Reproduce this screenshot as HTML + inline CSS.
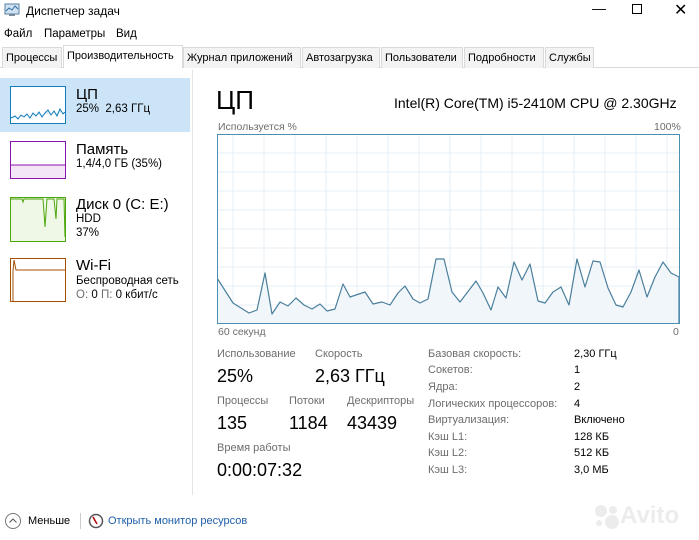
<!DOCTYPE html>
<html><head><meta charset="utf-8"><style>
*{margin:0;padding:0;box-sizing:border-box}
body{width:699px;height:540px;background:#fff;font-family:"Liberation Sans","Noto Sans CJK SC",sans-serif;color:#000;position:relative;overflow:hidden;font-size:12px}
.a{position:absolute;white-space:nowrap}
.tab{position:absolute;top:47px;height:21px;background:#f3f3f3;border:1px solid #dadada;border-bottom:none;font-size:11px;padding:4px 0 0 3px;overflow:hidden}
.g{color:#6d6d6d;font-size:11px}
.big{font-size:18px}
.k{font-size:11px;color:#6d6d6d}
.v{font-size:11px;color:#000}
</style></head><body>
<svg class="a" style="left:4px;top:2px" width="18" height="16"><rect x="1" y="2" width="14" height="10" fill="#cfe3f3" stroke="#5a7fa0"/><polyline points="2,9 5,6 8,8 11,4 14,7" fill="none" stroke="#2d6aa0"/><rect x="5" y="12" width="6" height="2" fill="#7a8a99"/></svg>
<div class="a" style="left:26px;top:4px;font-size:12px">Диспетчер задач</div>
<div class="a" style="left:592px;top:0px;font-size:14px">—</div>
<div class="a" style="left:632px;top:4px;width:10px;height:10px;border:1px solid #000"></div>
<div class="a" style="left:674px;top:0px;font-size:16px">✕</div>
<div class="a" style="left:4px;top:28px;font-size:11.5px">Файл</div>
<div class="a" style="left:44px;top:28px;font-size:11.5px">Параметры</div>
<div class="a" style="left:116px;top:28px;font-size:11.5px">Вид</div>
<div class="a" style="left:0;top:67px;width:699px;height:1px;background:#dadada"></div>
<div class="tab" style="left:2px;width:60px">Процессы</div>
<div class="tab" style="left:63px;width:120px;top:45px;height:23px;background:#fff">Производительность</div>
<div class="tab" style="left:183px;width:118px">Журнал приложений</div>
<div class="tab" style="left:302px;width:78px">Автозагрузка</div>
<div class="tab" style="left:381px;width:82px">Пользователи</div>
<div class="tab" style="left:464px;width:80px">Подробности</div>
<div class="tab" style="left:545px;width:49px">Службы</div>

<div class="a" style="left:0;top:78px;width:190px;height:54px;background:#cce4f7"></div>
<div class="a" style="left:192px;top:70px;width:1px;height:425px;background:#e3e3e3"></div>
<svg class="a" style="left:10px;top:86px" width="56" height="38"><rect x=".5" y=".5" width="55" height="37" fill="#fff" stroke="#117dbb"/><polyline points="1,32 5,30 8,33 11,29 14,31 17,28 20,32 23,27 26,30 29,26 32,31 35,27 38,24 41,29 44,25 47,30 50,23 53,28 55,26" fill="#dcecf7" stroke="#117dbb"/></svg>
<div class="a" style="left:76px;top:86px;font-size:15px">ЦП</div>
<div class="a" style="left:76px;top:103px;font-size:11.5px">25%&nbsp; 2,63 ГГц</div>

<svg class="a" style="left:10px;top:141px" width="56" height="38"><rect x=".5" y=".5" width="55" height="37" fill="#fff" stroke="#8b12ae"/><rect x="1" y="24" width="54" height="13" fill="#f3e6f7"/><line x1="1" y1="24" x2="55" y2="24" stroke="#8b12ae"/></svg>
<div class="a" style="left:76px;top:141px;font-size:15px">Память</div>
<div class="a" style="left:76px;top:158px;font-size:11.5px">1,4/4,0 ГБ (35%)</div>

<svg class="a" style="left:10px;top:197px" width="56" height="45"><rect x=".5" y=".5" width="55" height="44" fill="#eff7e6" stroke="#4da60c"/><polyline points="1,2 12,2 13,5 14,2 33,2 35,30 37,2 44,2 46,22 47,2 54,2 55,40" fill="none" stroke="#4da60c"/></svg>
<div class="a" style="left:76px;top:196px;font-size:15px">Диск 0 (C: E:)</div>
<div class="a" style="left:76px;top:213px;font-size:11.5px">HDD</div>
<div class="a" style="left:76px;top:227px;font-size:11.5px">37%</div>

<svg class="a" style="left:10px;top:258px" width="56" height="44"><rect x=".5" y=".5" width="55" height="43" fill="#fff" stroke="#a74f01"/><polyline points="3,44 3,13 4,2 6,12 55,12" fill="none" stroke="#a74f01"/></svg>
<div class="a" style="left:76px;top:257px;font-size:15px">Wi-Fi</div>
<div class="a" style="left:76px;top:275px;font-size:11.5px">Беспроводная сеть</div>
<div class="a" style="left:76px;top:289px;font-size:11.5px"><span style="color:#6d6d6d">О:</span> 0 <span style="color:#6d6d6d">П:</span> 0 кбит/с</div>

<div class="a" style="left:216px;top:85px;font-size:26px">ЦП</div>
<div class="a" style="left:394px;top:95px;font-size:14px">Intel(R) Core(TM) i5-2410M CPU @ 2.30GHz</div>
<div class="a g" style="left:218px;top:121px;font-size:10.5px">Используется %</div>
<div class="a g" style="left:654px;top:121px;font-size:10.5px">100%</div>
<svg class="a" style="left:217px;top:134px" width="463" height="190">
<g stroke="#e3eff6" stroke-width="1">
<line x1="16" y1="0" x2="16" y2="190"/><line x1="47" y1="0" x2="47" y2="190"/><line x1="78" y1="0" x2="78" y2="190"/><line x1="109" y1="0" x2="109" y2="190"/><line x1="140" y1="0" x2="140" y2="190"/><line x1="171" y1="0" x2="171" y2="190"/><line x1="202" y1="0" x2="202" y2="190"/><line x1="233" y1="0" x2="233" y2="190"/><line x1="264" y1="0" x2="264" y2="190"/><line x1="295" y1="0" x2="295" y2="190"/><line x1="326" y1="0" x2="326" y2="190"/><line x1="357" y1="0" x2="357" y2="190"/><line x1="388" y1="0" x2="388" y2="190"/><line x1="419" y1="0" x2="419" y2="190"/><line x1="450" y1="0" x2="450" y2="190"/>
<line x1="0" y1="19" x2="463" y2="19"/><line x1="0" y1="38" x2="463" y2="38"/><line x1="0" y1="57" x2="463" y2="57"/><line x1="0" y1="76" x2="463" y2="76"/><line x1="0" y1="95" x2="463" y2="95"/><line x1="0" y1="114" x2="463" y2="114"/><line x1="0" y1="133" x2="463" y2="133"/><line x1="0" y1="152" x2="463" y2="152"/><line x1="0" y1="171" x2="463" y2="171"/>
</g>
<g transform="translate(-217,-134)">
<polygon points="217,278 233,303 249,313 257,310 265,273 272,314 280,302 288,306 296,298 304,305 312,309 320,304 327,311 335,309 343,284 350,297 365,292 373,304 382,302 390,305 398,293 405,286 413,299 420,303 428,299 436,259 444,259 452,292 460,302 476,281 483,293 491,310 498,287 506,298 514,262 522,280 530,264 538,301 545,303 553,292 561,287 569,305 577,259 585,287 593,261 600,262 608,288 616,305 623,307 631,292 639,270 647,297 655,277 663,262 671,273 679,277 679,324 217,324" fill="#f1f6fa" stroke="#4a7f9c" stroke-width="1.2" stroke-linejoin="round"/>
</g>
<rect x=".5" y=".5" width="462" height="189" fill="none" stroke="#4d8fb3"/>
</svg>
<div class="a g" style="left:218px;top:326px;font-size:10.5px">60 секунд</div>
<div class="a g" style="left:673px;top:326px;font-size:10.5px">0</div>

<div class="a g" style="left:217px;top:348px">Использование</div>
<div class="a g" style="left:315px;top:348px">Скорость</div>
<div class="a big" style="left:217px;top:366px">25%</div>
<div class="a big" style="left:315px;top:366px">2,63 ГГц</div>
<div class="a g" style="left:217px;top:395px">Процессы</div>
<div class="a g" style="left:289px;top:395px">Потоки</div>
<div class="a g" style="left:347px;top:395px">Дескрипторы</div>
<div class="a big" style="left:217px;top:413px">135</div>
<div class="a big" style="left:289px;top:413px">1184</div>
<div class="a big" style="left:347px;top:413px">43439</div>
<div class="a g" style="left:217px;top:442px">Время работы</div>
<div class="a big" style="left:217px;top:460px">0:00:07:32</div>

<div class="a k" style="left:428px;top:348px">Базовая скорость:</div><div class="a v" style="left:574px;top:348px">2,30 ГГц</div>
<div class="a k" style="left:428px;top:364px">Сокетов:</div><div class="a v" style="left:574px;top:364px">1</div>
<div class="a k" style="left:428px;top:381px">Ядра:</div><div class="a v" style="left:574px;top:381px">2</div>
<div class="a k" style="left:428px;top:398px">Логических процессоров:</div><div class="a v" style="left:574px;top:398px">4</div>
<div class="a k" style="left:428px;top:414px">Виртуализация:</div><div class="a v" style="left:574px;top:414px">Включено</div>
<div class="a k" style="left:428px;top:431px">Кэш L1:</div><div class="a v" style="left:574px;top:431px">128 КБ</div>
<div class="a k" style="left:428px;top:447px">Кэш L2:</div><div class="a v" style="left:574px;top:447px">512 КБ</div>
<div class="a k" style="left:428px;top:464px">Кэш L3:</div><div class="a v" style="left:574px;top:464px">3,0 МБ</div>

<svg class="a" style="left:4px;top:512px" width="18" height="18"><circle cx="9" cy="9" r="7.5" fill="none" stroke="#777"/><polyline points="5.5,10.5 9,7 12.5,10.5" fill="none" stroke="#555"/></svg>
<div class="a" style="left:28px;top:515px;font-size:11px">Меньше</div>
<div class="a" style="left:80px;top:513px;width:1px;height:16px;background:#ccc"></div>
<svg class="a" style="left:88px;top:513px" width="16" height="16"><circle cx="8" cy="8" r="6.5" fill="#fff" stroke="#555" stroke-width="1.5"/><line x1="5" y1="4" x2="9" y2="11" stroke="#b00" stroke-width="1.5"/></svg>
<div class="a" style="left:108px;top:515px;font-size:11px;color:#1e5fa8">Открыть монитор ресурсов</div>
<svg class="a" style="left:592px;top:502px" width="30" height="28"><g fill="#ececec"><circle cx="9" cy="9" r="6"/><circle cx="21" cy="8" r="4"/><circle cx="20" cy="20" r="7"/><circle cx="7" cy="21" r="3"/></g></svg>
<div class="a" style="left:620px;top:502px;font-size:24px;font-weight:bold;color:#ececec">Avito</div>
</body></html>
